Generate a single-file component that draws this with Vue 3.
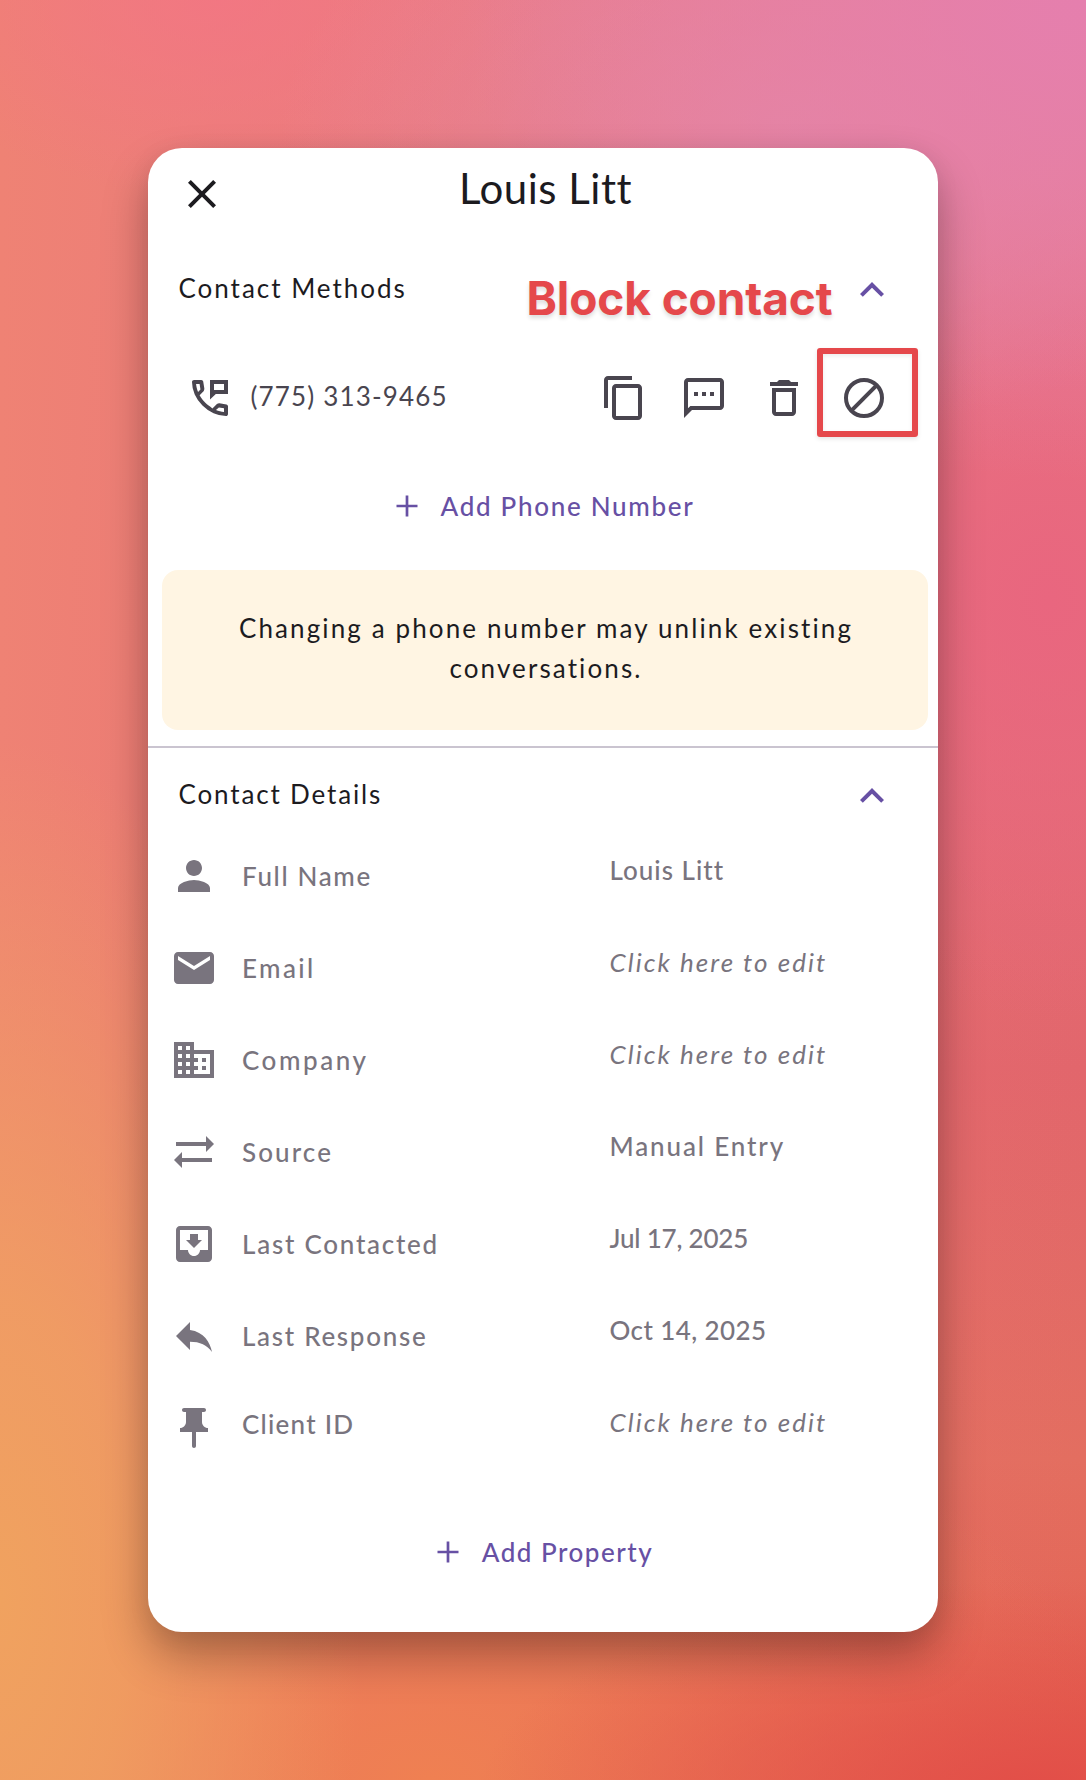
<script setup>
const paths = {
  close: 'M19 6.41 17.59 5 12 10.59 6.41 5 5 6.41 10.59 12 5 17.59 6.41 19 12 13.41 17.59 19 19 17.59 13.41 12z',
  chevron: 'm12 8-6 6 1.41 1.41L12 10.83l4.59 4.58L18 14z',
  phone: 'M19.95 21q-3.125 0-6.175-1.363t-5.55-3.862-3.862-5.55T3 4.05q0-.45.3-.75t.75-.3H7.7q.35 0 .6.238t.3.562l.55 3.3q.05.4-.025.675T8.9 8.45L6.8 10.6q.6 1.1 1.3 2t1.575 1.75q.775.775 1.625 1.438T13.2 17.2l2.25-2.15q.225-.225.588-.338t.712-.062l3.45.6q.35.1.575.363t.225.587v3.75q0 .45-.3.75t-.75.3ZM6.025 9l1.2-1.3L6.8 5H5.025q.125 1.025.35 2.025T6.025 9Zm8.95 8.95q.975.425 1.988.675T19 18.95v-1.8l-2.55-.425ZM12 3v9.8l2.9-2.8H21V3Zm2 2h5v3h-5Z',
  copy: 'M16 1H4c-1.1 0-2 .9-2 2v14h2V3h12V1zm3 4H8c-1.1 0-2 .9-2 2v14c0 1.1.9 2 2 2h11c1.1 0 2-.9 2-2V7c0-1.1-.9-2-2-2zm0 16H8V7h11v14z',
  sms: 'M20 2H4c-1.1 0-2 .9-2 2v18l4-4h14c1.1 0 2-.9 2-2V4c0-1.1-.9-2-2-2zm0 14H5.17L4 17.17V4h16v12zM7 9h2v2H7zm4 0h2v2h-2zm4 0h2v2h-2z',
  trash: 'M6 19c0 1.1.9 2 2 2h8c1.1 0 2-.9 2-2V7H6v12zM8 9h8v10H8V9zm7.5-5-1-1h-5l-1 1H5v2h14V4z',
  person: 'M12 12c2.21 0 4-1.79 4-4s-1.79-4-4-4-4 1.79-4 4 1.79 4 4 4zm0 2c-2.67 0-8 1.34-8 4v2h16v-2c0-2.66-5.33-4-8-4z',
  mail: 'M20 4H4c-1.1 0-1.99.9-1.99 2L2 18c0 1.1.9 2 2 2h16c1.1 0 2-.9 2-2V6c0-1.1-.9-2-2-2zm0 4-8 5-8-5V6l8 5 8-5v2z',
  company: 'M12 7V3H2v18h20V7H12zM6 19H4v-2h2v2zm0-4H4v-2h2v2zm0-4H4V9h2v2zm0-4H4V5h2v2zm4 12H8v-2h2v2zm0-4H8v-2h2v2zm0-4H8V9h2v2zm0-4H8V5h2v2zm10 12h-8v-2h2v-2h-2v-2h2v-2h-2V9h8v10zm-2-8h-2v2h2v-2zm0 4h-2v2h2v-2z',
  swap: 'M3 7h15V4l4 4-4 4V9H3zM21 15H6v-3l-4 4 4 4v-3h15z',
  inbox: 'M19 3H4.99c-1.1 0-1.98.9-1.98 2L3 19c0 1.1.89 2 1.99 2H19c1.1 0 2-.9 2-2V5c0-1.1-.9-2-2-2zm0 12h-4c0 1.66-1.34 3-3 3s-3-1.34-3-3H4.99V5H19v10zm-3-5h-2V7h-4v3H8l4 4 4-4z',
  reply: 'M10 9V5l-7 7 7 7v-4.1c5 0 8.5 1.6 11 5.1-1-5-4-10-11-11z',
  pin: 'M16 9V4h1c.55 0 1-.45 1-1s-.45-1-1-1H7c-.55 0-1 .45-1 1s.45 1 1 1h1v5c0 1.66-1.34 3-3 3v2h6v7c0 .55.45 1 1 1s1-.45 1-1v-7h6v-2c-1.66 0-3-1.34-3-3z',
}

// track: letter-spacing in px for the label and the value
const rows = [
  { icon: 'person', label: 'Full Name', track: 1.65, value: 'Louis Litt', valueTrack: 1 },
  { icon: 'mail', label: 'Email', track: 2.4, value: '', valueTrack: 2.03 },
  { icon: 'company', label: 'Company', track: 2.55, value: '', valueTrack: 2.03 },
  { icon: 'swap', label: 'Source', track: 2.1, value: 'Manual Entry', valueTrack: 1.87 },
  { icon: 'inbox', label: 'Last Contacted', track: 1.75, value: 'Jul 17, 2025', valueTrack: -0.2 },
  { icon: 'reply', label: 'Last Response', track: 1.7, value: 'Oct 14, 2025', valueTrack: 0.4 },
  { icon: 'pin', label: 'Client ID', track: 1.24, value: '', valueTrack: 2.03 },
]
</script>

<template>
  <main class="backdrop">
    <article class="card">
      <header class="header">
        <svg class="icon close" viewBox="0 0 24 24"><path :d="paths.close" /></svg>
        <h1 class="title">Louis Litt</h1>
      </header>

      <section class="methods">
        <div class="section-head">
          <h2 class="section-title">Contact Methods</h2>
          <svg class="icon chevron" viewBox="0 0 24 24"><path :d="paths.chevron" /></svg>
          <span class="note">Block contact</span>
        </div>

        <div class="phone-row">
          <svg class="icon" viewBox="0 0 24 24"><path fill-rule="evenodd" :d="paths.phone" /></svg>
          <span class="phone">(775) 313-9465</span>
          <div class="actions">
            <svg class="icon" viewBox="0 0 24 24"><path :d="paths.copy" /></svg>
            <svg class="icon" viewBox="0 0 24 24"><path :d="paths.sms" /></svg>
            <svg class="icon" viewBox="0 0 24 24"><path :d="paths.trash" /></svg>
            <span class="block">
              <svg class="icon" viewBox="0 0 24 24">
                <g fill="none" stroke="currentColor" stroke-width="2">
                  <circle cx="12" cy="12" r="9" />
                  <path d="M5.6 18.4 18.4 5.6" />
                </g>
              </svg>
              <span class="highlight"></span>
            </span>
          </div>
        </div>

        <div class="add">
          <svg class="plus" viewBox="0 0 24 24"><path d="M19 12.9h-6.1V19h-1.8v-6.1H5v-1.8h6.1V5h1.8v6.1H19z" /></svg>
          <span class="add-phone">Add Phone Number</span>
        </div>

        <p class="notice">Changing a phone number may unlink existing conversations.</p>
      </section>

      <section class="details">
        <div class="section-head">
          <h2 class="section-title details-title">Contact Details</h2>
          <svg class="icon chevron" viewBox="0 0 24 24"><path :d="paths.chevron" /></svg>
        </div>

        <ul class="rows">
          <li v-for="row in rows" :key="row.label" class="row">
            <svg class="icon row-icon" viewBox="0 0 24 24"><path :d="paths[row.icon]" /></svg>
            <span class="label" :style="{ letterSpacing: row.track + 'px' }">{{ row.label }}</span>
            <span class="value" :class="{ empty: !row.value }" :style="{ letterSpacing: row.valueTrack + 'px' }">{{ row.value || 'Click here to edit' }}</span>
          </li>
        </ul>

        <div class="add add-last">
          <svg class="plus" viewBox="0 0 24 24"><path d="M19 12.9h-6.1V19h-1.8v-6.1H5v-1.8h6.1V5h1.8v6.1H19z" /></svg>
          <span class="add-property">Add Property</span>
        </div>
      </section>
    </article>
  </main>
</template>

<style>
body {
  margin: 0;
}
</style>

<style scoped>
.backdrop {
  box-sizing: border-box;
  width: 1086px;
  height: 1780px;
  padding: 148px;
  overflow: hidden;
  font: 400 26px/40px Lato, sans-serif;
  color: #1c1b1f;
  background:
    radial-gradient(ellipse 620px 480px at 1086px 0, #e57fae 0%, rgba(229, 127, 174, 0) 100%),
    radial-gradient(ellipse 520px 300px at 800px 130px, rgba(228, 136, 160, 0.9) 0%, rgba(228, 136, 160, 0) 100%),
    radial-gradient(ellipse 340px 420px at 1050px 600px, #e9667f 0%, rgba(233, 102, 127, 0) 100%),
    radial-gradient(ellipse 330px 200px at 220px 0, rgba(243, 117, 132, 0.8) 0%, rgba(243, 117, 132, 0) 100%),
    radial-gradient(ellipse 560px 210px at 1040px 1790px, #e24e48 0%, rgba(226, 78, 72, 0) 100%),
    radial-gradient(ellipse 360px 860px at 0 1600px, #f0a25f 0%, rgba(240, 162, 96, 0.8) 35%, rgba(240, 150, 96, 0) 100%),
    radial-gradient(ellipse 700px 420px at 430px 1780px, #ef8052 0%, rgba(239, 124, 80, 0) 100%),
    linear-gradient(90deg, rgba(239, 130, 116, 1) 0%, rgba(234, 116, 116, 0.4) 50%, rgba(228, 102, 106, 0) 100%),
    linear-gradient(180deg, #ea7f92 0%, #e2666c 60%, #e36e60 82%, #e4604f 100%);
}

.card {
  box-sizing: border-box;
  width: 790px;
  height: 1484px;
  border-radius: 34px;
  background: #fff;
  box-shadow:
    0 24px 46px rgba(0, 0, 0, 0.29),
    0 4px 26px rgba(0, 0, 0, 0.06);
}

h1,
h2,
p,
ul {
  margin: 0;
  padding: 0;
  font-weight: 400;
}

.icon {
  display: block;
  flex: none;
  width: 48px;
  height: 48px;
  fill: currentColor;
}

.header {
  display: flex;
  height: 118px;
  padding-left: 30px;
}

.close {
  margin-top: 22px;
}

.title {
  margin: 16px 0 0 233px;
  font-size: 42px;
  line-height: 48px;
  letter-spacing: 0.5px;
}

.section-head {
  position: relative;
  display: flex;
  justify-content: space-between;
  height: 48px;
  padding: 0 42px 0 30.5px;
}

.section-title {
  margin-top: 2px;
  font-size: 26px;
  letter-spacing: 1.98px;
}

.details-title {
  letter-spacing: 1.85px;
}

.chevron {
  color: #6750a4;
}

.note {
  position: absolute;
  top: 4px;
  left: 378.5px;
  font: 700 46px/56px Inter, sans-serif;
  letter-spacing: -0.1px;
  white-space: nowrap;
  color: #e5484b;
  text-shadow: 0 3px 4px rgba(0, 0, 0, 0.14);
}

.phone-row {
  display: flex;
  height: 48px;
  margin-top: 60px;
  padding: 0 50px 0 38px;
  color: #49454f;
}

.phone {
  margin: 2px 0 0 16.5px;
  letter-spacing: 1.16px;
}

.actions {
  display: flex;
  gap: 32px;
  margin-left: auto;
}

.block {
  position: relative;
}

.highlight {
  position: absolute;
  top: -26px;
  left: -23px;
  box-sizing: border-box;
  width: 101px;
  height: 89px;
  border: 6px solid #e5484b;
  border-radius: 3px;
  box-shadow:
    0 2px 4px rgba(0, 0, 0, 0.1),
    inset 0 2px 4px rgba(0, 0, 0, 0.08);
}

.add {
  display: flex;
  align-items: center;
  justify-content: center;
  gap: 16px;
  height: 40px;
  margin-top: 64px;
  padding-right: 3px;
  font-weight: 500;
  color: #6750a4;
}

.add-last {
  margin-top: 38px;
}

.plus {
  width: 36px;
  height: 36px;
  fill: currentColor;
}

.add-phone {
  letter-spacing: 1.7px;
}

.add-property {
  letter-spacing: 1.5px;
}

.notice {
  box-sizing: border-box;
  height: 160px;
  margin: 44px 10px 0 14px;
  padding: 38px 59px 0 61px;
  border-radius: 16px;
  text-align: center;
  letter-spacing: 2.12px;
  background: #fff5e3;
}

.details {
  margin-top: 16px;
  padding-top: 24px;
  border-top: 2px solid #cac4d0;
}

.rows {
  margin-top: 30px;
  list-style: none;
  color: #79747e;
}

.row {
  display: flex;
  height: 92px;
  padding-left: 22px;
  font-weight: 500;
}

.row-icon {
  margin-top: 2px;
}

.label {
  width: 343.5px;
  margin: 6px 0 0 24px;
}

.row:last-child .label {
  margin-top: 2px;
}

.value {
  margin-left: 24px;
}

.empty {
  font-style: italic;
  font-weight: 400;
}
</style>
